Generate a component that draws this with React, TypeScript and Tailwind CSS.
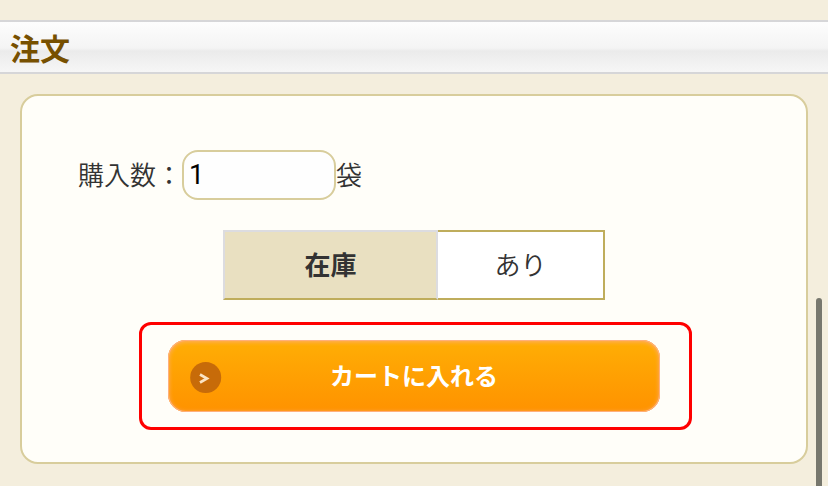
import { useState } from "react";

export default function App() {
  const [count, setCount] = useState("1");

  return (
    <div className="relative h-[486px] w-full overflow-hidden bg-[#f4eedd] pt-5 font-['Noto_Sans_CJK_JP',sans-serif] text-[26px] text-[#333333]">
      <header className="flex h-[54px] items-center border-y-2 border-[#d6d6d8] bg-[linear-gradient(to_bottom,#fdfdfd_0%,#f4f4f4_52%,#ebebeb_58%,#f6f6f6_100%)] pl-2.5">
        <h1 className="text-[30px] leading-[50px] font-bold text-[#775000]">
          注文
        </h1>
      </header>

      <main className="mx-5 mt-5 flex h-[370px] flex-col rounded-[18px] border-2 border-[#d8cd9c] bg-[#fffef9] pt-[54px]">
        <div className="ml-14 flex h-[50px] items-center">
          <label htmlFor="count" className="w-[104px] pb-1 font-[350]">
            購入数：
          </label>
          <input
            id="count"
            value={count}
            onChange={(e) => setCount(e.target.value)}
            className="h-[50px] w-[154px] rounded-2xl border-2 border-[#d8cd9c] bg-[#fefefe] pr-1.5 pl-[5px] font-['Roboto','Noto_Sans_CJK_JP',sans-serif] text-[27px] font-normal text-black outline-none"
          />
          <span className="pb-1 font-[350]">袋</span>
        </div>

        <div className="mt-[30px] ml-[201px] flex h-[70px] w-[382px]">
          <div className="flex w-[215px] items-center justify-center border-2 border-[#dcdce0] border-b-[#bfad5c] bg-[#e9e0c1] pb-1 font-bold">
            在庫
          </div>
          <div className="flex flex-1 items-center justify-center border-2 border-l-0 border-[#bfad5c] bg-white pb-1 font-[350]">
            あり
          </div>
        </div>

        <div className="mt-[22px] ml-[117px] flex h-[108px] w-[553px] rounded-xl border-3 border-[#ff0000] pt-[15px] pl-[26px]">
          <button className="relative h-[72px] w-[492px] rounded-[18px] bg-linear-to-b from-[#ffae05] to-[#ff9200] pb-0.5 text-2xl font-bold text-white shadow-[inset_0_0_0_1px_#ffb07c,inset_0_1px_4px_1px_#ffad68]">
            <svg
              className="absolute top-[21px] left-[22px]"
              width="32"
              height="32"
              viewBox="0 0 32 32"
              fill="none"
            >
              <circle cx="15.7" cy="16.5" r="15.5" fill="#c76b09" />
              <path
                d="M10 13.5 17 17.5 10 21.5"
                stroke="#fbe3c4"
                strokeWidth="2.6"
              />
            </svg>
            カートに入れる
          </button>
        </div>
      </main>

      <div className="absolute top-[298px] right-1.5 h-[200px] w-1.5 rounded-full bg-[#77776d]" />
    </div>
  );
}
